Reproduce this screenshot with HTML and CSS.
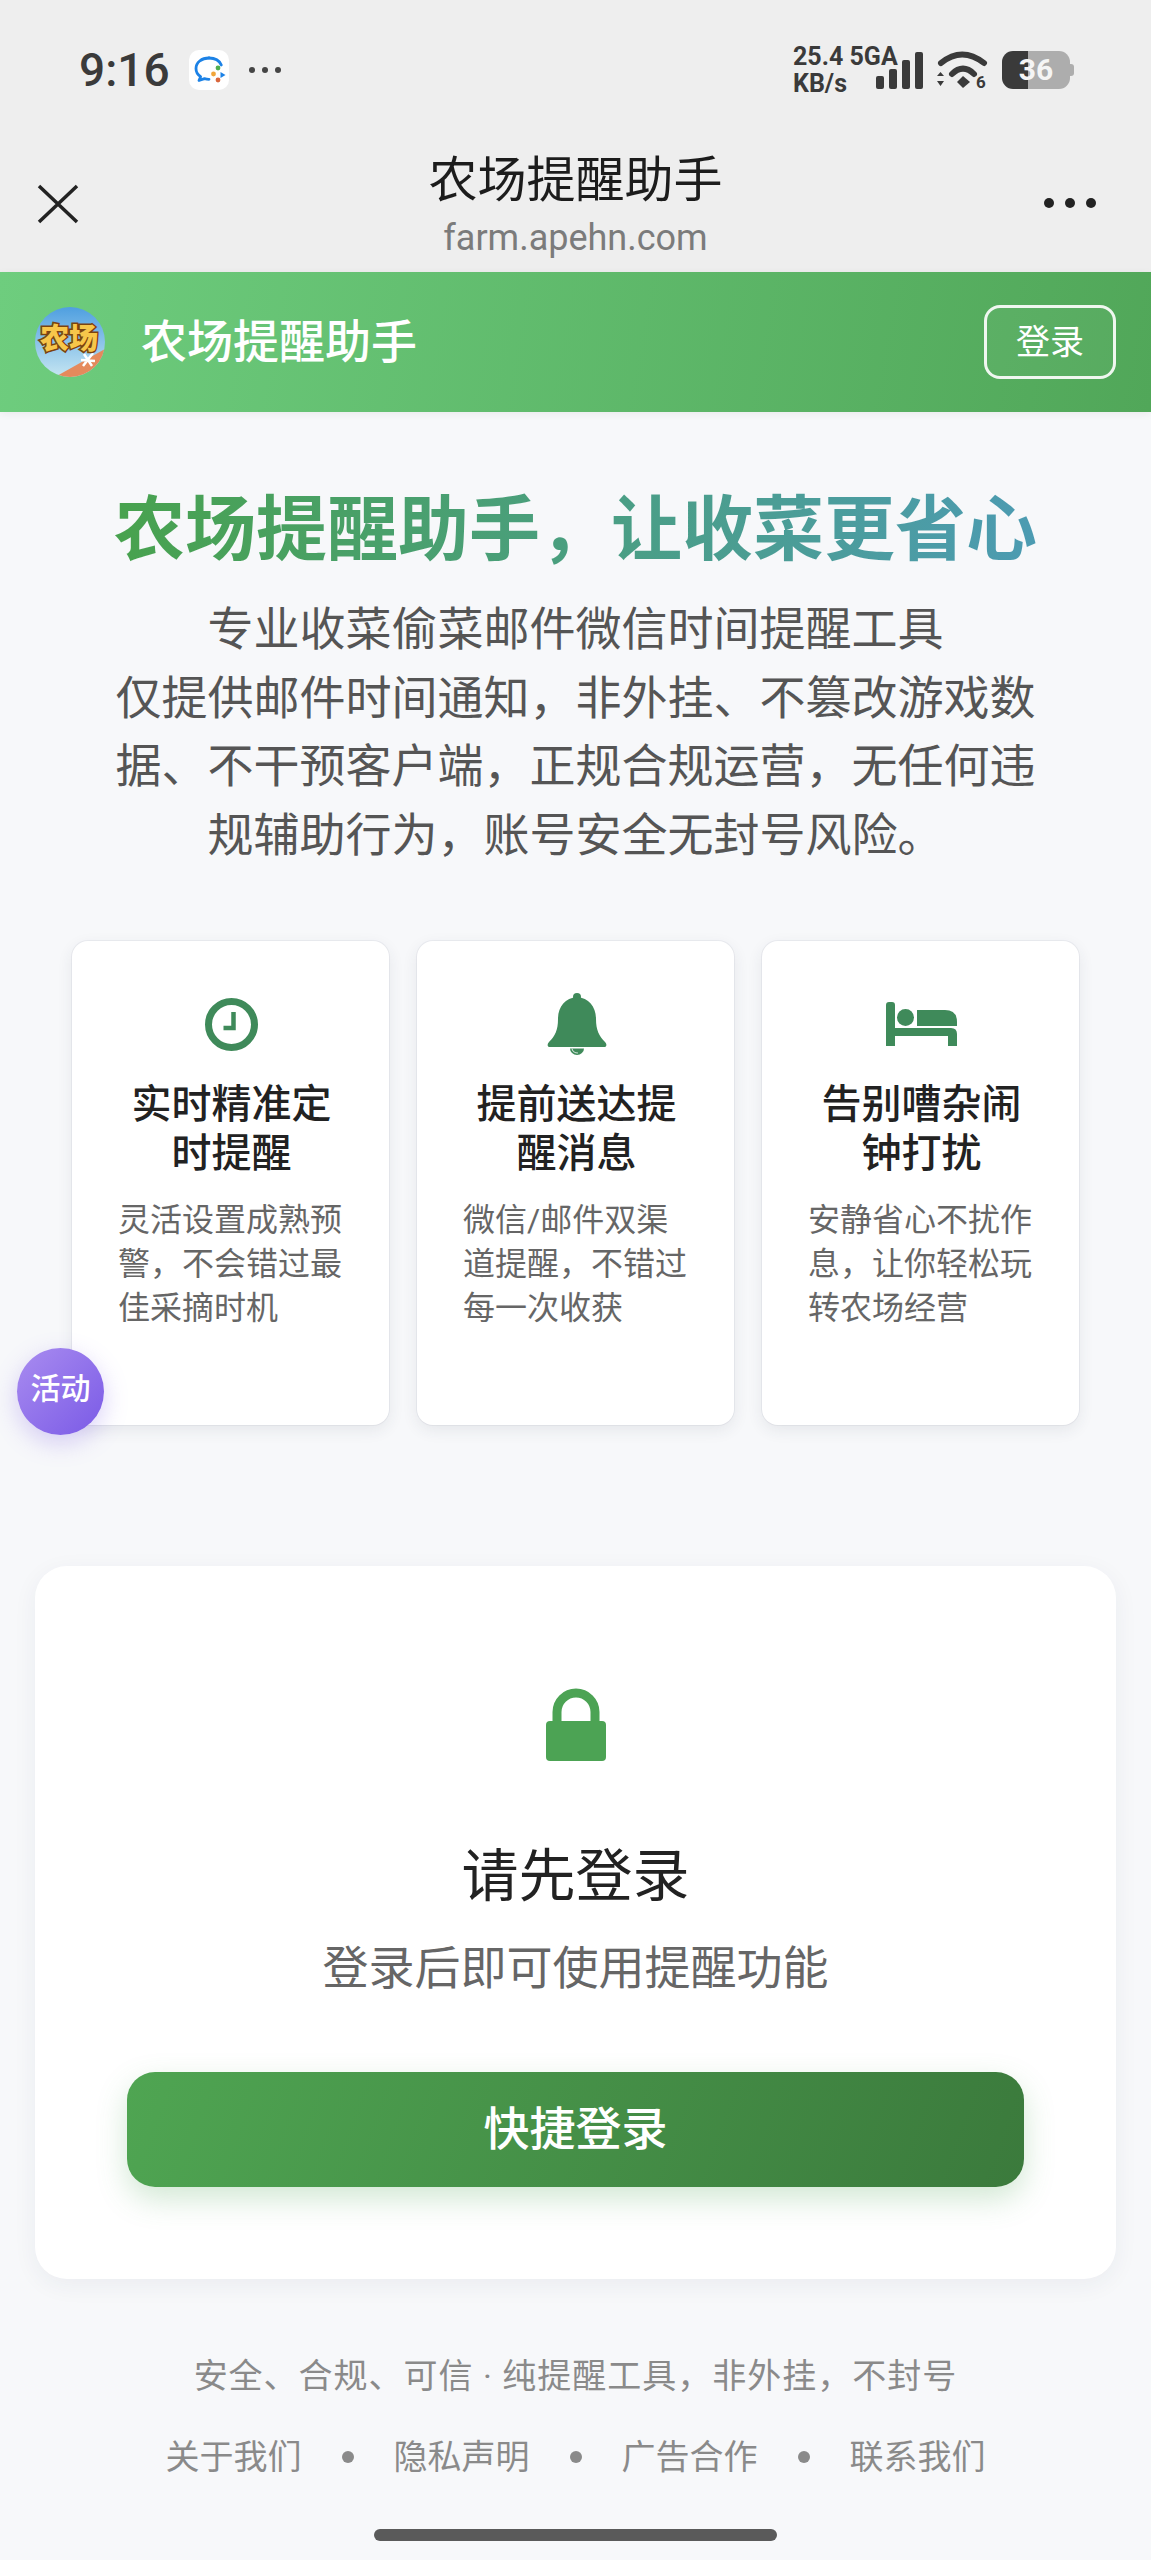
FILE: index.html
```html
<!DOCTYPE html>
<html lang="zh-CN">
<head>
    <meta charset="UTF-8">
    <meta name="viewport" content="width=device-width, initial-scale=1.0">
    <title>农场提醒助手</title>
    <link rel="stylesheet" href="styles.css">
</head>
<body>
    <div class="chrome">
        <div class="status-bar">
            <div class="status-left">
                <span class="status-time">9:16</span>
                <span class="app-badge">
                    <svg viewBox="0 0 40 40" width="40" height="40">
                        <path d="M20 8c-7.500 0-13 4.500-13 10.500 0 3.500 1.800 6.300 4.600 8.200L10 30.500l5.500-1.800c1.500.4 3 .6 4.500.6" fill="none" stroke="#1c82e6" stroke-width="2.800" stroke-linecap="round" stroke-linejoin="round"/>
                        <path d="M20 8c5.800 0 10.500 2.800 12.300 7" fill="none" stroke="#1c82e6" stroke-width="2.800" stroke-linecap="round"/>
                        <circle cx="29" cy="18" r="2.400" fill="#4fae4e"/>
                        <circle cx="24.500" cy="24" r="2.400" fill="#f1a63a"/>
                        <circle cx="29" cy="30" r="2.400" fill="#d9663c"/>
                        <path d="M31.500 22l5 3-5 3z" fill="#1c82e6"/>
                    </svg>
                </span>
                <span class="status-dots"><i></i><i></i><i></i></span>
            </div>
            <div class="status-right">
                <div class="net-speed">
                    <span>25.4 5GA</span>
                    <span>KB/s</span>
                </div>
                <div class="signal"><i class="bar-1"></i><i class="bar-2"></i><i class="bar-3"></i><i class="bar-4"></i></div>
                <svg class="wifi" viewBox="0 0 51 42" width="51" height="42">
                    <path d="M4 12Q25-5 47 12" fill="none" stroke="#3a3a3a" stroke-width="6" stroke-linecap="round"/>
                    <path d="M15 23Q26 12 37 23" fill="none" stroke="#3a3a3a" stroke-width="6" stroke-linecap="round"/>
                    <path d="M20 31l6-6 7 6-7 6z" fill="#3a3a3a"/>
                    <path d="M0 25l3.500-4 3.500 4zM0 30l3.500 5 3.500-5z" fill="#3a3a3a"/>
                    <text x="39" y="37" class="wifi-six">6</text>
                </svg>
                <div class="battery">36</div>
            </div>
        </div>
        <div class="nav-bar">
            <svg class="nav-close" viewBox="0 0 42 40" width="42" height="40">
                <path d="M2 2l38 36M40 2L2 38" fill="none" stroke="#222" stroke-width="3.500"/>
            </svg>
            <div class="nav-title">
                <div class="nav-name">农场提醒助手</div>
                <div class="nav-url">farm.apehn.com</div>
            </div>
            <div class="nav-more"><i></i><i></i><i></i></div>
        </div>
    </div>

    <header class="site-header">
        <div class="brand">
            <svg class="brand-logo" viewBox="0 0 70 70" width="70" height="70">
                <defs>
                    <linearGradient id="sky" x1="0" y1="0" x2="0" y2="1">
                        <stop offset="0" stop-color="#4f9fe0"/>
                        <stop offset="1" stop-color="#c6e6f2"/>
                    </linearGradient>
                    <clipPath id="logoClip"><circle cx="35" cy="35" r="35"/></clipPath>
                </defs>
                <g clip-path="url(#logoClip)">
                    <rect width="70" height="70" fill="url(#sky)"/>
                    <path d="M20 70L70 42V70z" fill="#e58a5c"/>
                    <path d="M49 47l8 12M58 46l-10 13M46 53l14 1" stroke="#fff" stroke-width="2.500"/>
                </g>
                <text x="34" y="42" class="logo-text">农场</text>
            </svg>
            <span class="brand-name">农场提醒助手</span>
        </div>
        <button class="header-login">登录</button>
    </header>

    <main class="page">
        <section class="hero">
            <h1 class="hero-title">农场提醒助手，让收菜更省心</h1>
            <p class="hero-sub">专业收菜偷菜邮件微信时间提醒工具<br>仅提供邮件时间通知，非外挂、不篡改游戏数据、不干预客户端，正规合规运营，无任何违规辅助行为，账号安全无封号风险。</p>
        </section>

        <section class="features">
            <div class="feature-card">
                <div class="feature-icon">
                    <svg viewBox="0 0 53 53" width="53" height="53">
                        <circle cx="26.500" cy="26.500" r="23" fill="none" stroke="#3f8a5a" stroke-width="7"/>
                        <path d="M28.500 14v16h-10" fill="none" stroke="#3f8a5a" stroke-width="4.500"/>
                    </svg>
                </div>
                <h3>实时精准定时提醒</h3>
                <p>灵活设置成熟预警，不会错过最佳采摘时机</p>
            </div>
            <div class="feature-card">
                <div class="feature-icon">
                    <svg viewBox="0 0 60 62" width="60" height="62">
                        <circle cx="30" cy="4" r="4" fill="#3f8a5a"/>
                        <path d="M30 4C18 5 11 14 11 26c0 11-3 17-9 23-2 2-2 5 1 5h54c3 0 3-3 1-5-6-6-9-12-9-23C49 14 42 5 30 4z" fill="#3f8a5a"/>
                        <path d="M23 55.500a7 6.500 0 0 0 14 0z" fill="#3f8a5a"/>
                        <path d="M25 55.500a6 5 0 0 0 6 4.500" fill="none" stroke="#cfe3d6" stroke-width="1.200"/>
                    </svg>
                </div>
                <h3>提前送达提醒消息</h3>
                <p>微信/邮件双渠道提醒，不错过每一次收获</p>
            </div>
            <div class="feature-card">
                <div class="feature-icon">
                    <svg viewBox="0 0 71 44" width="71" height="44">
                        <path d="M0 3q0-3 3-3h3q3 0 3 3v23h56q6 0 6 6v12h-9v-10H9v10H0z" fill="#3f8a5a"/>
                        <circle cx="19.500" cy="15.500" r="8.500" fill="#3f8a5a"/>
                        <path d="M31 8h28q12 0 12 12v4H31z" fill="#3f8a5a"/>
                    </svg>
                </div>
                <h3>告别嘈杂闹钟打扰</h3>
                <p>安静省心不扰作息，让你轻松玩转农场经营</p>
            </div>
        </section>

        <section class="login-card">
            <svg class="login-lock" viewBox="0 0 60 73" width="60" height="73">
                <path d="M11 36V24a19 19 0 0 1 38 0v12" fill="none" stroke="#4ca354" stroke-width="9"/>
                <rect x="0" y="33" width="60" height="40" rx="4" fill="#4ca354"/>
            </svg>
            <h2>请先登录</h2>
            <p>登录后即可使用提醒功能</p>
            <button class="login-btn">快捷登录</button>
        </section>

        <footer class="site-footer">
            <div class="footer-note">安全、合规、可信 · 纯提醒工具，非外挂，不封号</div>
            <div class="footer-links">
                <a>关于我们</a><span class="dot"></span>
                <a>隐私声明</a><span class="dot"></span>
                <a>广告合作</a><span class="dot"></span>
                <a>联系我们</a>
            </div>
        </footer>
    </main>

    <div class="home-bar"></div>
    <div class="float-activity">活动</div>
</body>
</html>
```
FILE: styles.css
```css
* {
    box-sizing: border-box;
}
body {
    position: relative;
    margin: 0;
    height: 2560px;
    overflow: hidden;
    font-family: Roboto, "Noto Sans CJK SC", sans-serif;
    background: #f7f8fa;
    color: #222;
}
h1, h2, h3, p {
    margin: 0;
}

/* phone status + webview title */
.chrome {
    height: 272px;
    background: #eeeeee;
}
.status-bar {
    display: flex;
    justify-content: space-between;
    align-items: center;
    height: 140px;
    padding: 0 81px 0 79px;
    color: #3a3a3a;
}
.status-left {
    display: flex;
    align-items: center;
}
.status-time {
    font-size: 46px;
    font-weight: 500;
    line-height: 46px;
}
.app-badge {
    display: block;
    width: 40px;
    height: 40px;
    margin-left: 19px;
    background: #fff;
    border-radius: 10px;
}
.app-badge svg {
    display: block;
}
.status-dots {
    display: flex;
    gap: 7px;
    margin-left: 20px;
}
.status-dots i {
    width: 6px;
    height: 6px;
    background: #444;
    border-radius: 50%;
}
.status-right {
    display: flex;
    align-items: center;
}
.net-speed {
    display: flex;
    flex-direction: column;
    width: 83px;
    margin-top: -1px;
    font-size: 25px;
    font-weight: 700;
    line-height: 27px;
    white-space: nowrap;
}
.signal {
    display: flex;
    align-items: flex-end;
    gap: 5px;
    height: 37px;
}
.signal i {
    width: 8px;
    background: #3a3a3a;
    border-radius: 2px;
}
.bar-1 { height: 13px; }
.bar-2 { height: 20px; }
.bar-3 { height: 29px; }
.bar-4 { height: 37px; }
.wifi {
    margin: 4px 0 0 14px;
}
.wifi-six {
    font-size: 17px;
    font-weight: 700;
    fill: #3a3a3a;
}
.battery {
    position: relative;
    width: 68px;
    height: 38px;
    margin-left: 14px;
    background: linear-gradient(90deg, #3a3a3a 38%, #adadad 38%);
    border-radius: 11px;
    color: #f5f5f5;
    font-size: 30px;
    font-weight: 700;
    line-height: 38px;
    text-align: center;
}
.battery::after {
    content: "";
    position: absolute;
    right: -4px;
    top: 13px;
    width: 4px;
    height: 12px;
    background: #adadad;
    border-radius: 0 3px 3px 0;
}
.nav-bar {
    display: grid;
    grid-template-columns: 1fr auto 1fr;
    align-items: start;
    height: 132px;
    padding: 0 37px;
}
.nav-close {
    margin-top: 44px;
}
.nav-title {
    text-align: center;
}
.nav-name {
    font-size: 49px;
    line-height: 60px;
    margin-top: 11px;
    color: #1c1c1c;
}
.nav-url {
    margin-top: 4px;
    font-size: 36px;
    line-height: 46px;
    color: #7b7b7b;
}
.nav-more {
    display: flex;
    justify-content: flex-end;
    gap: 11px;
    margin: 58px 18px 0 0;
}
.nav-more i {
    width: 10px;
    height: 10px;
    background: #222;
    border-radius: 50%;
}

.site-header {
    display: flex;
    justify-content: space-between;
    align-items: center;
    height: 140px;
    padding: 0 35px;
    background: linear-gradient(100deg, #6ecd7e 0%, #51a759 100%);
    box-shadow: 0 2px 8px rgba(0,0,0,0.06);
}
.brand {
    display: flex;
    align-items: center;
}
.brand-logo {
    display: block;
}
.logo-text {
    font-family: "Noto Sans CJK SC", sans-serif;
    font-size: 29px;
    font-weight: 900;
    text-anchor: middle;
    fill: #f7c64a;
    stroke: #7a4310;
    stroke-width: 3px;
    paint-order: stroke;
}
.brand-name {
    margin: 0 0 9px 36px;
    color: #fff;
    font-size: 46px;
    font-weight: 500;
}
.header-login {
    width: 132px;
    height: 74px;
    padding: 0 0 5px;
    background: rgba(255,255,255,0.04);
    border: 3px solid rgba(255,255,255,0.9);
    border-radius: 16px;
    color: #fff;
    font-family: inherit;
    font-size: 34px;
}

.page {
    padding: 72px 35px 0;
}
.hero {
    text-align: center;
}
.hero-title {
    display: inline-block;
    font-size: 71px;
    font-weight: 700;
    line-height: 92px;
    white-space: nowrap;
    background: linear-gradient(90deg, #48a24e, #4c9bb2);
    -webkit-background-clip: text;
    background-clip: text;
    color: transparent;
}
.hero-sub {
    width: 930px;
    margin: 19px auto 0;
    font-size: 46px;
    line-height: 68.600px;
    color: #555;
}

.features {
    display: grid;
    grid-template-columns: repeat(3, 317px);
    gap: 28px;
    margin: 72px 37px 0;
}
.feature-card {
    min-height: 484px;
    padding: 51px 44px 0 46px;
    background: #fff;
    border-radius: 16px;
    box-shadow: 0 0 0 1px rgba(30,40,70,0.05), 0 5px 16px rgba(40,50,80,0.09);
}
.feature-icon {
    display: flex;
    justify-content: center;
    align-items: center;
    height: 64px;
}
.feature-card h3 {
    margin-top: 24px;
    font-size: 40px;
    font-weight: 500;
    line-height: 49px;
    text-align: center;
    color: #222;
}
.feature-card p {
    margin-top: 20px;
    font-size: 32px;
    line-height: 44px;
    color: #666;
}

.login-card {
    display: flex;
    flex-direction: column;
    align-items: center;
    height: 713px;
    margin-top: 141px;
    padding: 122px 92px 0;
    background: #fff;
    border-radius: 32px;
    box-shadow: 0 6px 24px rgba(40,50,80,0.06);
}
.login-lock {
    display: block;
    flex-shrink: 0;
}
.login-card h2 {
    margin-top: 78px;
    font-size: 57px;
    font-weight: 400;
    line-height: 76px;
    color: #222;
}
.login-card p {
    margin-top: 22px;
    font-size: 46px;
    line-height: 62px;
    color: #666;
}
.login-btn {
    flex-shrink: 0;
    width: 100%;
    height: 115px;
    margin-top: 73px;
    padding: 0 0 9px;
    background: linear-gradient(110deg, #4fa552 0%, #3b7a3c 100%);
    border: none;
    border-radius: 28px;
    color: #fff;
    font-family: inherit;
    font-size: 46px;
    font-weight: 500;
    box-shadow: 0 12px 30px rgba(76,163,84,0.25);
}

.site-footer {
    margin-top: 72px;
    text-align: center;
    color: #8a8a8a;
    font-size: 34px;
    line-height: 50px;
}
.footer-note {
    letter-spacing: 1px;
}
.footer-links {
    display: flex;
    justify-content: center;
    align-items: center;
    gap: 40px;
    margin-top: 31px;
}
.dot {
    width: 12px;
    height: 12px;
    background: #8a8a8a;
    border-radius: 50%;
}

.home-bar {
    width: 403px;
    height: 12px;
    margin: 47px auto 0;
    background: #5a5a5a;
    border-radius: 6px;
}

.float-activity {
    position: absolute;
    left: 17px;
    top: 1348px;
    width: 87px;
    height: 87px;
    background: linear-gradient(135deg, #a98cf0 0%, #7a5ae6 100%);
    border-radius: 50%;
    box-shadow: 0 8px 24px rgba(122,90,230,0.28);
    color: #fff;
    font-size: 30px;
    font-weight: 500;
    line-height: 82px;
    text-align: center;
}
```
